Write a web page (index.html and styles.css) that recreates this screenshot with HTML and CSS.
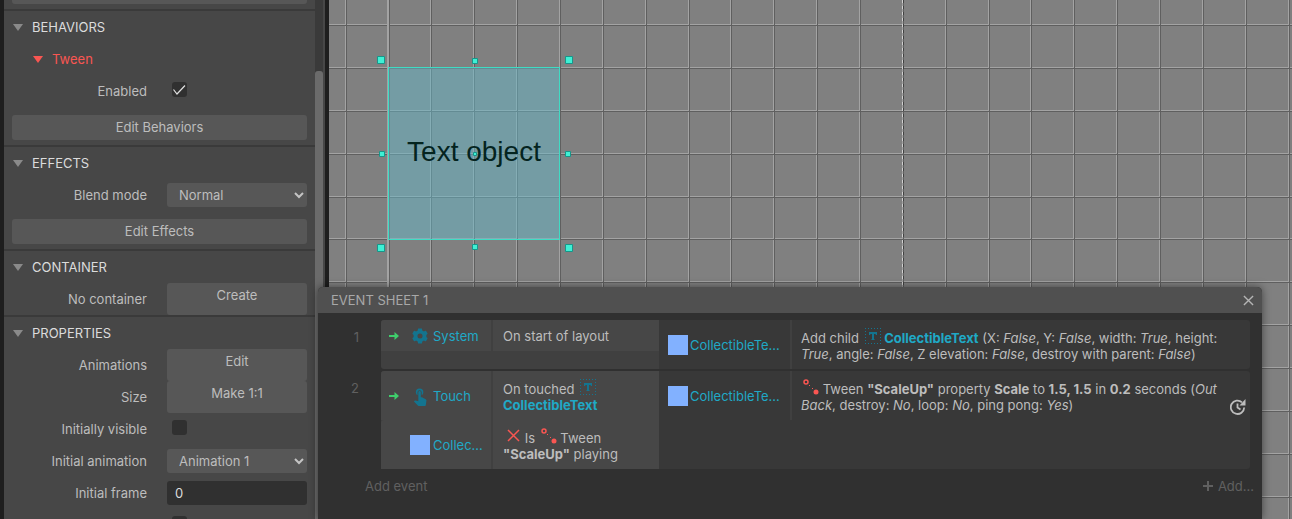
FILE: index.html
```html
<!DOCTYPE html>
<html lang="en">
<head>
    <meta charset="UTF-8">
    <meta name="viewport" content="width=device-width, initial-scale=1.0">
    <title>Layout 1 - Event sheet 1</title>
    <link rel="stylesheet" href="styles.css">
</head>
<body>
    <svg class="defs" aria-hidden="true">
        <symbol id="arrow" viewBox="0 0 12 10">
            <path d="M1 5H9" stroke="#3fce6c" stroke-width="2"/>
            <path d="M6.500 1L11 5L6.500 9Z" fill="#3fce6c"/>
        </symbol>
        <symbol id="gear" viewBox="0 0 24 24">
            <path fill="#13748f" d="M21.500 13.500a9.500 9.500 0 0 0 0-3l1.700-1.400a.6.600 0 0 0 .1-.8l-2.300-4a.6.600 0 0 0-.8-.2l-2.400 1a9 9 0 0 0-2.400-1.400L15 1.300a.6.600 0 0 0-.6-.5H9.600a.6.600 0 0 0-.6.500L8.600 3.700a9 9 0 0 0-2.400 1.400l-2.400-1a.6.600 0 0 0-.8.200l-2.300 4a.6.600 0 0 0 .1.800l1.700 1.400a9.500 9.500 0 0 0 0 3L.8 14.900a.6.600 0 0 0-.1.800l2.300 4c.2.300.5.400.8.200l2.400-1a9 9 0 0 0 2.400 1.400l.4 2.400c0 .3.300.5.600.5h4.800c.3 0 .6-.2.600-.5l.4-2.400a9 9 0 0 0 2.400-1.400l2.400 1c.3.200.6.100.8-.2l2.300-4a.6.600 0 0 0-.1-.8ZM12 15.800a3.800 3.800 0 1 1 0-7.600a3.800 3.800 0 0 1 0 7.600Z"/>
        </symbol>
        <symbol id="touch" viewBox="0 0 24 24">
            <path fill="#13748f" d="M9 11.240V7.500a2.500 2.500 0 0 1 5 0v3.740c1.210-.81 2-2.180 2-3.740a4.500 4.500 0 0 0-9 0c0 1.560.79 2.930 2 3.740Zm9.840 4.630l-4.540-2.260c-.17-.07-.35-.11-.54-.11H13v-6a1.500 1.500 0 0 0-3 0v10.740l-3.430-.72c-.08-.01-.15-.03-.24-.03c-.31 0-.59.130-.79.330l-.79.800l4.940 4.940c.27.270.65.440 1.060.440h6.790c.75 0 1.330-.55 1.440-1.280l.75-5.270c.01-.07.020-.14.020-.2c0-.62-.38-1.160-.91-1.380Z"/>
        </symbol>
        <symbol id="textobj" viewBox="0 0 16 16">
            <path d="M0 .5H16M0 15.500H16M.5 0V16M15.500 0V16" fill="none" stroke="#13748f" stroke-dasharray="1 2"/>
            <path d="M4 4H12V7H11L10.500 6H9V11L10 12H6L7 11V6H5.500L5 7H4Z" fill="#13748f"/>
        </symbol>
        <symbol id="tween" viewBox="0 0 16 16">
            <circle cx="3" cy="3" r="2" fill="none" stroke="#f95652" stroke-width="1.500"/>
            <path d="M6 6h1v1h-1zM9 9h1v1h-1z" fill="#f95652"/>
            <circle cx="13" cy="13" r="2.500" fill="#f95652"/>
        </symbol>
        <symbol id="chevron" viewBox="0 0 10 8">
            <path d="M1 2L5 6L9 2" fill="none" stroke="#c4c4c4" stroke-width="2"/>
        </symbol>
    </svg>

    <aside class="properties">
        <div class="property-list">
            <section>
                <div class="wide-row"><button class="button" aria-label="More information"></button></div>
            </section>
            <section>
                <h2>Behaviors</h2>
                <h3>Tween</h3>
                <div class="row">
                    <label for="enabled">Enabled</label>
                    <span class="check"><input type="checkbox" id="enabled" checked><svg viewBox="0 0 15 15"><path d="M1.500 7.500L5 12L13 3.500" fill="none" stroke="#e0e0e0" stroke-width="1.200"/></svg></span>
                </div>
                <div class="wide-row"><button class="button">Edit Behaviors</button></div>
            </section>
            <section>
                <h2>Effects</h2>
                <div class="row">
                    <label for="blend">Blend mode</label>
                    <span class="select"><select id="blend"><option>Normal</option></select><svg><use href="#chevron"/></svg></span>
                </div>
                <div class="wide-row"><button class="button">Edit Effects</button></div>
            </section>
            <section>
                <h2>Container</h2>
                <div class="row">
                    <label for="create">No container</label>
                    <button class="button tall" id="create">Create</button>
                </div>
            </section>
            <section>
                <h2>Properties</h2>
                <div class="row">
                    <label for="animations">Animations</label>
                    <button class="button tall" id="animations">Edit</button>
                </div>
                <div class="row">
                    <label for="size">Size</label>
                    <button class="button tall" id="size">Make 1:1</button>
                </div>
                <div class="row">
                    <label for="visible">Initially visible</label>
                    <span class="check"><input type="checkbox" id="visible"></span>
                </div>
                <div class="row">
                    <label for="animation">Initial animation</label>
                    <span class="select"><select id="animation"><option>Animation 1</option></select><svg><use href="#chevron"/></svg></span>
                </div>
                <div class="row">
                    <label for="frame">Initial frame</label>
                    <input class="field" type="text" id="frame" value="0">
                </div>
                <div class="row">
                    <span></span>
                    <span class="check"><input type="checkbox" aria-label="Enable collisions"></span>
                </div>
            </section>
        </div>
        <div class="scrollbar"><div class="thumb"></div></div>
    </aside>

    <main class="layout">
        <svg class="grid" aria-hidden="true">
            <!-- seven 32px cells at the current zoom take 300px -->
            <pattern id="cells" x="17" y="25" width="300" height="300" patternUnits="userSpaceOnUse">
                <path stroke="#a3a3a3" d="M42.500 0V300M84.500 0V300M127.500 0V300M170.500 0V300M213.500 0V300M256.500 0V300M299.500 0V300"/>
                <path stroke="#a3a3a3" d="M0 42.500H300M0 85.500H300M0 128.500H300M0 171.500H300M0 213.500H300M0 256.500H300M0 299.500H300"/>
                <path stroke="#5f5f5f" d="M.5 0V300M43.500 0V300M85.500 0V300M128.500 0V300M171.500 0V300M214.500 0V300M257.500 0V300"/>
                <path stroke="#5f5f5f" d="M0 .5H300M0 43.500H300M0 86.500H300M0 129.500H300M0 172.500H300M0 214.500H300M0 257.500H300"/>
            </pattern>
            <rect width="100%" height="100%" fill="url(#cells)"/>
            <path d="M59 0V2000" stroke="#a3a3a3" stroke-width="2"/>
            <!-- viewport edge -->
            <path d="M573.500 0V2000" stroke="#d0d0d0" stroke-dasharray="3 3"/>
            <path d="M574.500 0V2000" stroke="#404040" stroke-dasharray="3 3"/>
        </svg>
        <div class="text-object">
            <span>Text object</span>
            <svg class="handles" viewBox="0 0 196 196" aria-hidden="true">
                <g fill="#3ff0d4" stroke="#17968a">
                    <path d="M1.500 1.500h7v7h-7zM189.500 1.500h7v7h-7zM1.500 189.500h7v7h-7zM189.500 189.500h7v7h-7z"/>
                    <path d="M96.500 3.500h5v5h-5zM96.500 189.500h5v5h-5zM3.500 96.500h5v5h-5zM189.500 96.500h5v5h-5zM97.500 97.500h3v3h-3z"/>
                </g>
            </svg>
        </div>
    </main>

    <section class="event-sheet">
        <header>
            <h1>EVENT SHEET 1</h1>
            <button class="close" aria-label="Close"><svg viewBox="0 0 12 12"><path d="M1 1L11 11M11 1L1 11" stroke="#b4b4b4" stroke-width="1.500"/></svg></button>
        </header>
        <div class="events">
            <div class="event">
                <span class="number">1</span>
                <div class="conditions">
                    <div class="condition">
                        <div class="object"><svg class="trigger"><use href="#arrow"/></svg><svg class="icon gear"><use href="#gear"/></svg><span>System</span></div>
                        <p>On start of layout</p>
                    </div>
                </div>
                <div class="actions">
                    <div class="action">
                        <div class="object"><i class="swatch"></i><span>CollectibleTe...</span></div>
                        <p>Add child <svg class="inline"><use href="#textobj"/></svg> <b class="name">CollectibleText</b> (X: <em>False</em>, Y: <em>False</em>, width: <em>True</em>, height: <em>True</em>, angle: <em>False</em>, Z elevation: <em>False</em>, destroy with parent: <em>False</em>)</p>
                    </div>
                </div>
            </div>
            <div class="event">
                <span class="number">2</span>
                <div class="conditions">
                    <div class="condition">
                        <div class="object"><svg class="trigger"><use href="#arrow"/></svg><svg class="icon"><use href="#touch"/></svg><span>Touch</span></div>
                        <p>On touched <svg class="inline"><use href="#textobj"/></svg> <b class="name">CollectibleText</b></p>
                    </div>
                    <div class="condition">
                        <div class="object"><span class="trigger"></span><i class="swatch"></i><span>Collec...</span></div>
                        <p><svg class="inline" viewBox="0 0 16 16"><path d="M3 2L14 13M14 2L3 13" stroke="#f95652" stroke-width="1.500"/></svg> Is <svg class="inline"><use href="#tween"/></svg> Tween <b>"ScaleUp"</b> playing</p>
                    </div>
                </div>
                <div class="actions">
                    <div class="action">
                        <div class="object"><i class="swatch"></i><span>CollectibleTe...</span></div>
                        <p><svg class="inline"><use href="#tween"/></svg> Tween <b>"ScaleUp"</b> property <b>Scale</b> to <b>1.5, 1.5</b> in <b>0.2</b> seconds (<em>Out Back</em>, destroy: <em>No</em>, loop: <em>No</em>, ping pong: <em>Yes</em>)</p>
                        <svg class="async" viewBox="0 0 16 16"><path d="M14.200 8.500A6.700 6.700 0 1 1 12 3.300M7.500 4.500V8.500L10.500 10.500" fill="none" stroke="#bdbdbd" stroke-width="1.800"/><path d="M15.500 0V6.500H9.500Z" fill="#bdbdbd"/></svg>
                    </div>
                </div>
            </div>
            <footer>
                <a href="#">Add event</a>
                <a href="#"><svg viewBox="0 0 10 10"><path d="M5 0V10M0 5H10" stroke="#606060" stroke-width="2"/></svg>Add...</a>
            </footer>
        </div>
    </section>
</body>
</html>
```
FILE: styles.css
```css
* {
    box-sizing: border-box;
}
body {
    margin: 0;
    height: 100vh;
    display: flex;
    position: relative;
    overflow: hidden;
    background: #808080;
    color: #bdbdbd;
    font-family: Inter, "Liberation Sans", sans-serif;
    font-size: 13px;
    line-height: 16px;
}
h1, h2, h3, p {
    margin: 0;
    font-size: 13px;
    font-weight: 400;
}
button, input, select {
    font: inherit;
    color: inherit;
    border: 0;
    margin: 0;
    border-radius: 3px;
}
svg {
    display: block;
}
.defs {
    position: absolute;
    width: 0;
    height: 0;
}

/* Properties bar */
.properties {
    display: flex;
    flex: none;
    width: 329px;
    border: solid #1e1e1e;
    border-width: 0 4px;
    background: #474747;
    overflow: hidden;
}
.property-list {
    flex: 1;
    margin-top: -31px;
}
.property-list section {
    border-top: 2px solid #3a3a3a;
}
.property-list h2, .property-list h3 {
    display: flex;
    align-items: center;
    height: 32px;
    padding-left: 9px;
    gap: 9px;
    color: #dcdcdc;
}
.property-list h2 {
    text-transform: uppercase;
}
.property-list h2::before, .property-list h3::before {
    content: "";
    border: 5px solid transparent;
    border-top: 7px solid #8a8a8a;
    border-bottom: 0;
}
.property-list h3 {
    padding-left: 29px;
    color: #f95652;
}
.property-list h3::before {
    border-top-color: #f95652;
}
.row {
    display: grid;
    grid-template-columns: 143px 1fr;
    column-gap: 20px;
    align-items: center;
    height: 32px;
    padding-right: 8px;
}
.row label {
    text-align: right;
}
.wide-row {
    height: 38px;
    padding: 8px;
}
.button {
    display: block;
    width: 100%;
    height: 25px;
    padding: 0 0 1px;
    background: #575757;
}
.button.tall {
    height: 32px;
    padding-bottom: 8px;
}
.check {
    display: grid;
    width: 15px;
    height: 15px;
    margin: 0 0 3px 5px;
}
.check input {
    appearance: none;
    grid-area: 1 / 1;
    background: #303030;
}
.check svg {
    grid-area: 1 / 1;
    pointer-events: none;
}
.select {
    display: grid;
    align-items: center;
}
.select select {
    appearance: none;
    grid-area: 1 / 1;
    height: 24px;
    padding: 0 12px;
    background: #575757;
}
.select svg {
    grid-area: 1 / 1;
    justify-self: end;
    width: 10px;
    height: 8px;
    margin-right: 3px;
    pointer-events: none;
}
.field {
    width: 100%;
    height: 24px;
    padding: 0 8px;
    background: #303030;
    color: #dcdcdc;
}
.scrollbar {
    width: 8px;
    margin-right: 2px;
    padding-top: 71px;
    background: #3a3a3a;
}
.thumb {
    height: 100%;
    border-radius: 3px 3px 0 0;
    background: #6b6b6b;
}

/* Layout view */
.layout {
    flex: 1;
    position: relative;
    overflow: hidden;
}
.grid {
    width: 100%;
    height: 100%;
}
.text-object {
    position: absolute;
    left: 59px;
    top: 67px;
    width: 172px;
    height: 173px;
    display: grid;
    place-items: center;
    padding-bottom: 4px;
    border: 1px solid #3fdcc4;
    background: rgba(104, 184, 200, 0.5);
    color: #04241f;
    font: 28px/32px "Liberation Sans", sans-serif;
}
.handles {
    position: absolute;
    left: -13px;
    top: -13px;
    width: 196px;
    height: 196px;
    overflow: visible;
}

/* Event sheet window */
.event-sheet {
    position: absolute;
    left: 318px;
    right: 30px;
    top: 287px;
    bottom: 0;
    border-radius: 5px 5px 0 0;
    background: #303030;
    box-shadow: 0 0 8px rgba(0, 0, 0, 0.5);
}
.event-sheet header {
    display: flex;
    align-items: center;
    justify-content: space-between;
    height: 26px;
    padding: 0 8px 0 13px;
    border-radius: 5px 5px 0 0;
    background: #505050;
    color: #a8a8a8;
}
.close {
    padding: 0;
    background: none;
}
.close svg {
    width: 11px;
    height: 11px;
}
.events {
    display: grid;
    gap: 2px;
    padding: 7px 12px 0 0;
}
.event {
    display: grid;
    grid-template-columns: 63px 278px 1fr;
}
.number {
    padding: 9px 22px 0 0;
    text-align: right;
    color: #606060;
}
.conditions {
    background: #404040;
    border-radius: 3px 0 0 3px;
}
.actions {
    background: #383838;
    border-radius: 0 3px 3px 0;
}
.condition, .action {
    display: grid;
}
.condition {
    grid-template-columns: 112px 1fr;
    background: #474747;
    border-radius: 3px 0 0 0;
}
.action {
    grid-template-columns: 133px 1fr 24px;
}
.object {
    display: flex;
    align-items: center;
    gap: 2px;
    padding-left: 9px;
    border-right: 2px solid #404040;
    color: #1fa9c6;
    white-space: nowrap;
}
.condition .object {
    padding-left: 7px;
    gap: 3px;
}
.condition p, .action p {
    padding: 8px 4px 7px 9px;
}
.condition p {
    padding-left: 10px;
}
.trigger {
    width: 12px;
    height: 10px;
    margin-right: 7px;
}
.icon {
    width: 20px;
    height: 20px;
}
.icon.gear {
    padding: 2px;
}
.swatch {
    width: 20px;
    height: 20px;
    background: #82b1ff;
}
.inline {
    display: inline-block;
    width: 16px;
    height: 16px;
    margin-left: 2px;
    vertical-align: -1px;
}
b {
    font-weight: 700;
}
.name {
    color: #1fa9c6;
}
.async {
    align-self: end;
    justify-self: center;
    width: 16px;
    height: 16px;
    margin-bottom: 5px;
}
footer {
    display: flex;
    justify-content: space-between;
    margin-right: -4px;
    padding: 7px 0 0 47px;
}
footer a {
    display: flex;
    align-items: center;
    gap: 5px;
    color: #606060;
    text-decoration: none;
}
footer svg {
    width: 10px;
    height: 10px;
}
```
